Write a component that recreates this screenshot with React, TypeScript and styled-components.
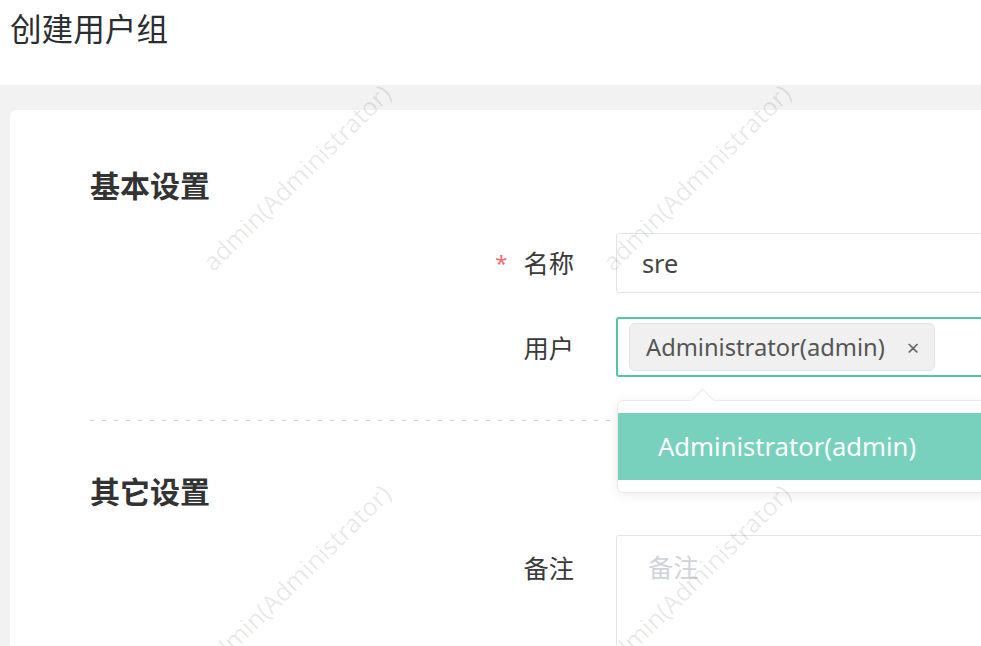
import React from "react";
import styled, { createGlobalStyle } from "styled-components";

const GlobalStyle = createGlobalStyle`
  html, body { margin: 0; padding: 0; overflow: hidden; background: #fff; }
  body { font-family: "Noto Sans", "Noto Sans CJK SC", sans-serif; color: #333; }
  * { box-sizing: border-box; }
`;

const Page = styled.div`
  position: relative;
  width: 981px;
  height: 646px;
  overflow: hidden;
  display: flex;
  flex-direction: column;
`;

const Header = styled.header`
  height: 85px;
  flex: none;
  padding: 9px 10px;
  background: #fff;
`;

const Title = styled.h1`
  margin: 0;
  font-size: 31.6px;
  line-height: 36px;
  font-weight: 400;
  color: #2b2d31;
  font-family: "Noto Sans CJK SC", sans-serif;
`;

const Main = styled.main`
  flex: 1;
  background: #f2f2f2;
  padding: 25px 0 0 10px;
`;

const Card = styled.section`
  width: 1200px;
  min-height: 700px;
  background: #fff;
  border-radius: 6px;
  padding: 54px 0 0 80px;
`;

const SectionTitle = styled.h2<{ $gap?: number }>`
  margin: 0 0 ${(p) => p.$gap ?? 29}px;
  font-size: 30px;
  line-height: 40px;
  font-weight: 700;
  color: #333;
  font-family: "Noto Sans CJK SC", sans-serif;
`;

const FormItem = styled.div<{ $top?: boolean; $mb?: number }>`
  display: flex;
  align-items: ${(p) => (p.$top ? "flex-start" : "center")};
  margin-bottom: ${(p) => p.$mb ?? 24}px;
`;

const Label = styled.label<{ $pt?: number }>`
  width: 526px;
  flex: none;
  padding-right: 42px;
  padding-top: ${(p) => p.$pt ?? 0}px;
  text-align: right;
  font-size: 25.3px;
  line-height: 36px;
  color: #3a3a3a;
  font-family: "Noto Sans CJK SC", sans-serif;
`;

const Required = styled.span`
  color: #f56c6c;
  font-size: 22px;
  margin-right: 16px;
  font-family: "Noto Sans", sans-serif;
  position: relative;
  top: -2px;
`;

const Field = styled.div`
  position: relative;
  width: 500px;
  flex: none;
`;

const TextInput = styled.div`
  height: 60px;
  border: 1px solid #e2e4e8;
  border-radius: 3px;
  padding: 0 25px;
  display: flex;
  align-items: center;
  font-size: 25.3px;
  color: #444;
`;

const SelectBox = styled.div`
  height: 60px;
  border: 2px solid #52c6a7;
  border-radius: 3px;
  padding: 0 11px;
  display: flex;
  align-items: center;
`;

const Tag = styled.span`
  height: 48px;
  display: inline-flex;
  align-items: center;
  gap: 22px;
  padding: 0 15px 0 16px;
  background: #f0f0f0;
  border: 1px solid #e4e4e4;
  border-radius: 6px;
  font-size: 23.7px;
  color: #555;
`;

const TagClose = styled.span`
  font-size: 22px;
  color: #666;
  line-height: 1;
`;

const Dropdown = styled.div`
  position: absolute;
  left: 1px;
  top: calc(100% + 23px);
  width: 520px;
  padding: 12px 0;
  background: #fff;
  border: 1px solid #e8eaee;
  border-radius: 6px;
  box-shadow: 0 2px 12px rgba(0, 0, 0, 0.08);
  z-index: 2;
  &::before {
    content: "";
    position: absolute;
    left: 76px;
    top: -9px;
    width: 16px;
    height: 16px;
    background: #fff;
    border-left: 1px solid #e8eaee;
    border-top: 1px solid #e8eaee;
    transform: rotate(45deg);
  }
`;

const Option = styled.div<{ $active?: boolean }>`
  height: 67px;
  display: flex;
  align-items: center;
  padding-left: 40px;
  font-size: 25.6px;
  color: ${(p) => (p.$active ? "#fff" : "#555")};
  background: ${(p) => (p.$active ? "#77d1bd" : "transparent")};
`;

const Divider = styled.div`
  height: 1px;
  margin: 43px 0 49px;
  background: repeating-linear-gradient(to right, #d0d0d0 0 4px, transparent 4px 12px);
`;

const TextArea = styled.div`
  height: 160px;
  border: 1px solid #e2e4e8;
  border-radius: 3px;
  padding: 12px 31px;
  font-size: 25.3px;
  line-height: 36px;
  color: #d0d3da;
  font-family: "Noto Sans CJK SC", sans-serif;
`;

const WatermarkLayer = styled.div`
  position: absolute;
  left: 96px;
  top: -23px;
  display: grid;
  grid-template-columns: repeat(3, 400px);
  grid-auto-rows: 400px;
  pointer-events: none;
  z-index: 5;
`;

const WatermarkCell = styled.div`
  display: flex;
  align-items: center;
  justify-content: center;
`;

const WatermarkText = styled.span`
  transform: rotate(-44.5deg);
  white-space: nowrap;
  font-size: 25px;
  color: rgba(0, 0, 0, 0.09);
  font-family: "Noto Sans", sans-serif;
`;

export default function App() {
  const cells = Array.from({ length: 6 });
  return (
    <>
      <GlobalStyle />
      <Page>
        <Header>
          <Title>创建用户组</Title>
        </Header>
        <Main>
          <Card>
            <SectionTitle>基本设置</SectionTitle>
            <FormItem>
              <Label>
                <Required>*</Required>名称
              </Label>
              <Field>
                <TextInput>sre</TextInput>
              </Field>
            </FormItem>
            <FormItem $mb={0}>
              <Label>用户</Label>
              <Field>
                <SelectBox>
                  <Tag>
                    Administrator(admin)
                    <TagClose>×</TagClose>
                  </Tag>
                </SelectBox>
                <Dropdown>
                  <Option $active>Administrator(admin)</Option>
                </Dropdown>
              </Field>
            </FormItem>
            <Divider />
            <SectionTitle $gap={25}>其它设置</SectionTitle>
            <FormItem $top>
              <Label $pt={14}>备注</Label>
              <Field>
                <TextArea>备注</TextArea>
              </Field>
            </FormItem>
          </Card>
        </Main>
        <WatermarkLayer>
          {cells.map((_, i) => (
            <WatermarkCell key={i}>
              <WatermarkText>admin(Administrator)</WatermarkText>
            </WatermarkCell>
          ))}
        </WatermarkLayer>
      </Page>
    </>
  );
}
